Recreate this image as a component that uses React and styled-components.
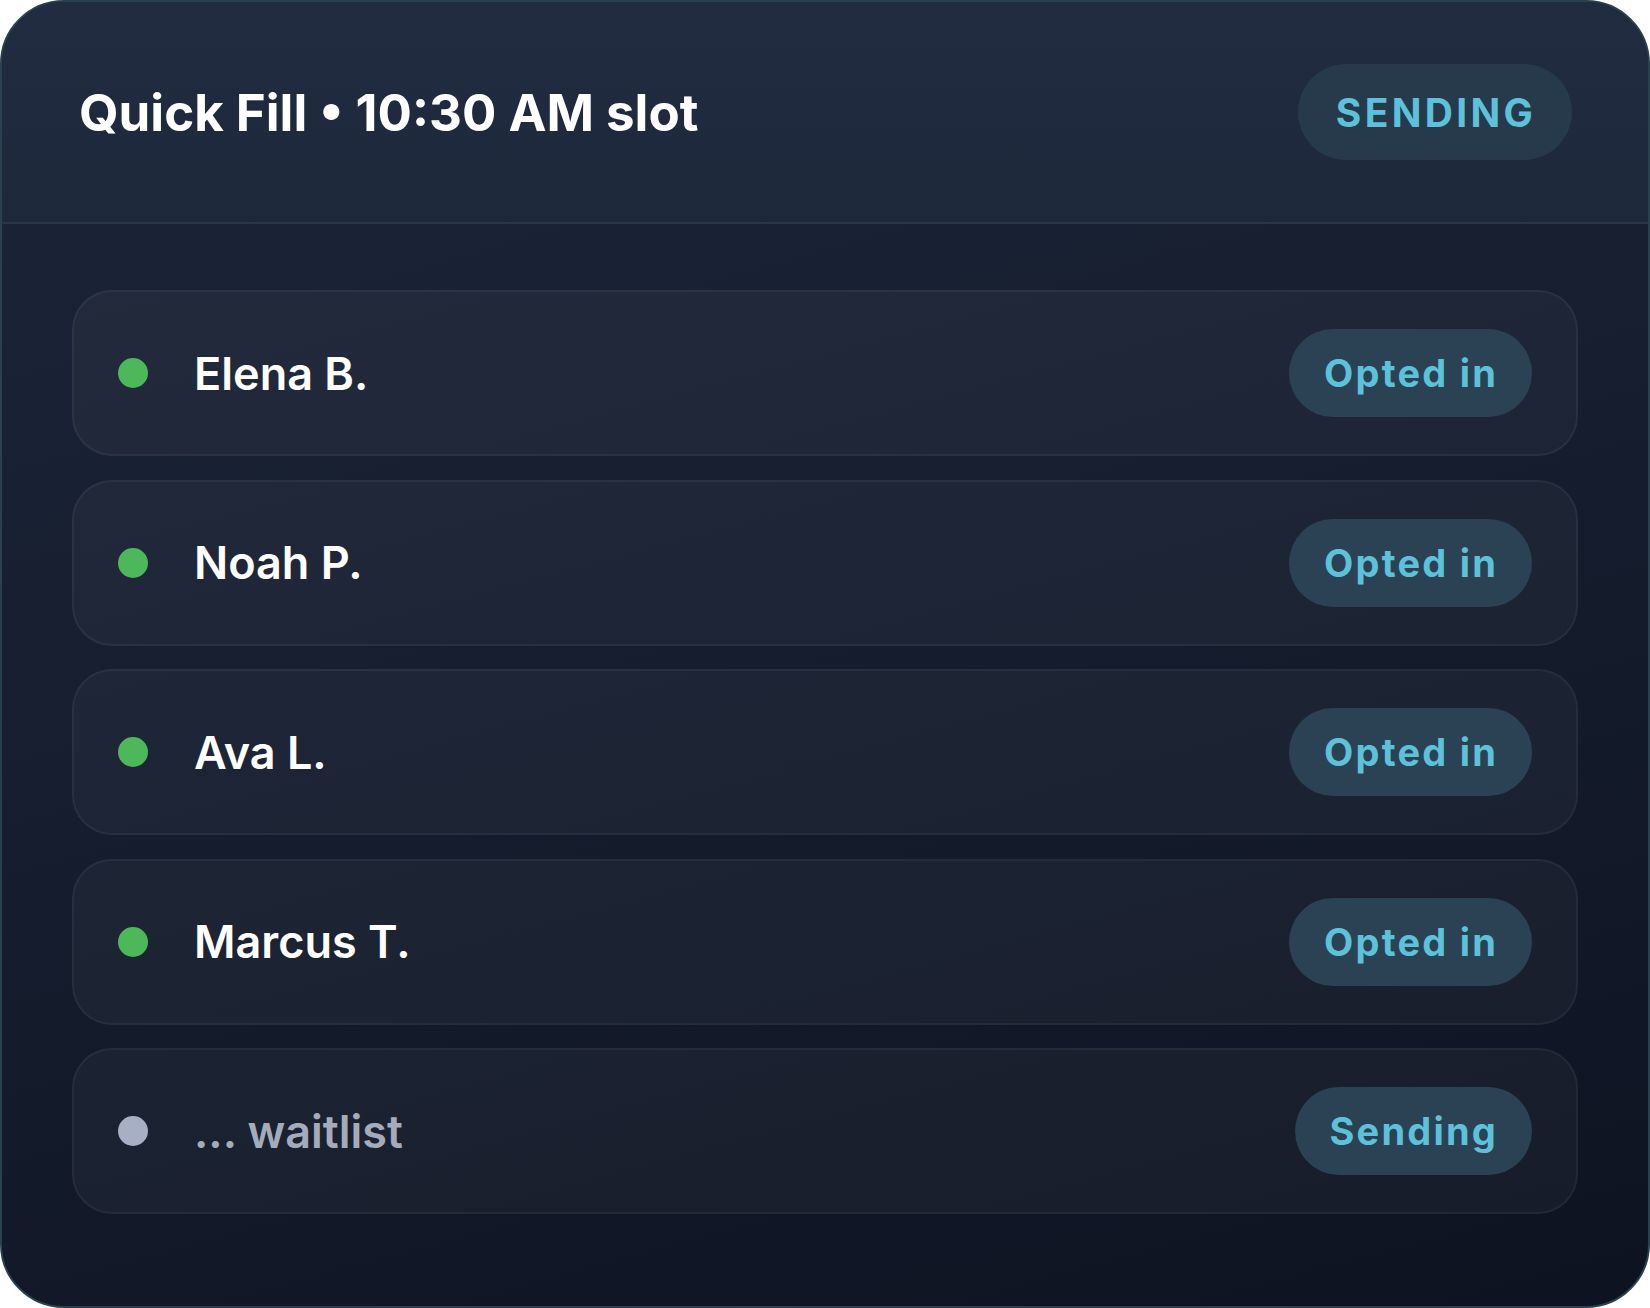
import React from 'react';
import styled, { createGlobalStyle } from 'styled-components';

const GlobalStyle = createGlobalStyle`
  html, body {
    margin: 0;
    padding: 0;
    background: #ffffff;
  }
  * {
    box-sizing: border-box;
  }
`;

const Card = styled.div`
  width: 1650px;
  height: 1308px;
  display: flex;
  flex-direction: column;
  border: 2px solid #29414f;
  border-radius: 64px;
  overflow: hidden;
  background: linear-gradient(165deg, #1c2639 0%, #161e2f 45%, #0e1321 100%);
  font-family: Inter, "Noto Sans", sans-serif;
`;

const Header = styled.div`
  height: 222px;
  flex-shrink: 0;
  display: flex;
  align-items: center;
  justify-content: space-between;
  padding: 0 76px 0 77px;
  border-bottom: 2px solid #28354a;
  background: linear-gradient(180deg, #222c41 0%, #1e283b 100%);
`;

const Title = styled.h1`
  margin: 0;
  color: #ffffff;
  font-size: 51px;
  font-weight: 700;
  letter-spacing: 0;
`;

const Pill = styled.span`
  display: inline-flex;
  align-items: center;
  justify-content: center;
  height: ${(p) => (p.$large ? '96px' : '88px')};
  padding: ${(p) => (p.$large ? '0 36px 0 38px' : '0 34px 0 35px')};
  border-radius: 48px;
  background: ${(p) => (p.$large ? '#263a4b' : '#2a4254')};
  color: #5dc1da;
  font-size: ${(p) => (p.$large ? '39px' : '38px')};
  font-weight: 700;
  letter-spacing: ${(p) => (p.$large ? '3.3px' : '2.2px')};
`;

const List = styled.div`
  display: flex;
  flex-direction: column;
  gap: 23.5px;
  padding: 66px 70px 0 70px;
`;

const Row = styled.div`
  height: 166px;
  display: flex;
  align-items: center;
  padding: 0 44px 0 44px;
  border-radius: 40px;
  border: 2px solid rgba(255, 255, 255, 0.05);
  background: rgba(255, 255, 255, 0.035);
`;

const Dot = styled.span`
  width: 30px;
  height: 30px;
  border-radius: 50%;
  flex-shrink: 0;
  background: ${(p) => (p.$muted ? '#a6afc3' : '#4cb85a')};
`;

const Name = styled.span`
  flex: 1;
  margin-left: 46px;
  color: ${(p) => (p.$muted ? '#a4acbb' : '#ffffff')};
  font-size: 45px;
  font-weight: 600;
`;

const people = [
  { name: 'Elena B.', status: 'Opted in' },
  { name: 'Noah P.', status: 'Opted in' },
  { name: 'Ava L.', status: 'Opted in' },
  { name: 'Marcus T.', status: 'Opted in' },
  { name: '... waitlist', status: 'Sending', muted: true },
];

export default function App() {
  return (
    <>
      <GlobalStyle />
      <Card>
        <Header>
          <Title>Quick Fill • 10:30 AM slot</Title>
          <Pill $large>SENDING</Pill>
        </Header>
        <List>
          {people.map((p) => (
            <Row key={p.name}>
              <Dot $muted={p.muted} />
              <Name $muted={p.muted}>{p.name}</Name>
              <Pill>{p.status}</Pill>
            </Row>
          ))}
        </List>
      </Card>
    </>
  );
}
